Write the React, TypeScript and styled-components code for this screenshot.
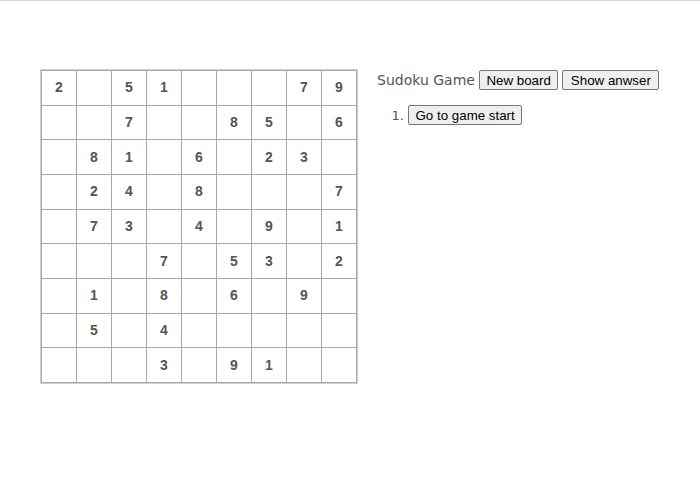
import React from "react";
import styled, { createGlobalStyle } from "styled-components";

const GlobalStyle = createGlobalStyle`
  html, body { margin: 0; padding: 0; background: #fff; }
  body { border-top: 1px solid #d8d8dc; font-family: "Liberation Sans", Arial, sans-serif; }
`;

const Page = styled.div`
  display: flex;
  flex-direction: row;
  align-items: flex-start;
  padding: 68px 0 0 40px;
`;

const Board = styled.div`
  border: 1px solid #cfcfcf;
`;

const Grid = styled.div`
  display: grid;
  grid-template-columns: repeat(9, 35px);
  grid-template-rows: repeat(9, 34.67px);
  border-left: 1px solid #a8a8a8;
  border-top: 1px solid #a8a8a8;
`;

const Cell = styled.div`
  border-right: 1px solid #a8a8a8;
  border-bottom: 1px solid #a8a8a8;
  display: flex;
  align-items: center;
  justify-content: center;
  padding-bottom: 1px;
  font-family: "Liberation Sans", Arial, sans-serif;
  font-weight: bold;
  font-size: 14px;
  color: #555;
`;

const Info = styled.div`
  margin-left: 19px;
  margin-top: 1px;
`;

const Header = styled.div`
  display: flex;
  align-items: center;
  gap: 4px;
`;

const Title = styled.span`
  font-family: "DejaVu Sans", sans-serif;
  font-size: 14px;
  color: #555;
`;

const Button = styled.button<{ $wide?: boolean }>`
  font-family: "Liberation Sans", Arial, sans-serif;
  font-size: 13.33px;
  color: #000;
  background: #efefef;
  border: 1px solid #767676;
  border-radius: 2px;
  padding: 1px ${(p) => (p.$wide ? "7.5px" : "6.5px")};
  height: 20px;
  line-height: 15px;
`;

const Moves = styled.ol`
  margin: 15px 0 0 0;
  padding-left: 31px;
  font-family: "DejaVu Sans", sans-serif;
  font-size: 13px;
  color: #555;
`;

const Move = styled.li``;

const board: (number | null)[][] = [
  [2, null, 5, 1, null, null, null, 7, 9],
  [null, null, 7, null, null, 8, 5, null, 6],
  [null, 8, 1, null, 6, null, 2, 3, null],
  [null, 2, 4, null, 8, null, null, null, 7],
  [null, 7, 3, null, 4, null, 9, null, 1],
  [null, null, null, 7, null, 5, 3, null, 2],
  [null, 1, null, 8, null, 6, null, 9, null],
  [null, 5, null, 4, null, null, null, null, null],
  [null, null, null, 3, null, 9, 1, null, null],
];

export default function App() {
  return (
    <>
      <GlobalStyle />
      <Page>
        <Board>
          <Grid>
            {board.map((row, r) =>
              row.map((v, c) => <Cell key={`${r}-${c}`}>{v ?? ""}</Cell>)
            )}
          </Grid>
        </Board>
        <Info>
          <Header>
            <Title>Sudoku Game</Title>
            <Button>New board</Button>
            <Button $wide>Show anwser</Button>
          </Header>
          <Moves>
            <Move>
              <Button>Go to game start</Button>
            </Move>
          </Moves>
        </Info>
      </Page>
    </>
  );
}
